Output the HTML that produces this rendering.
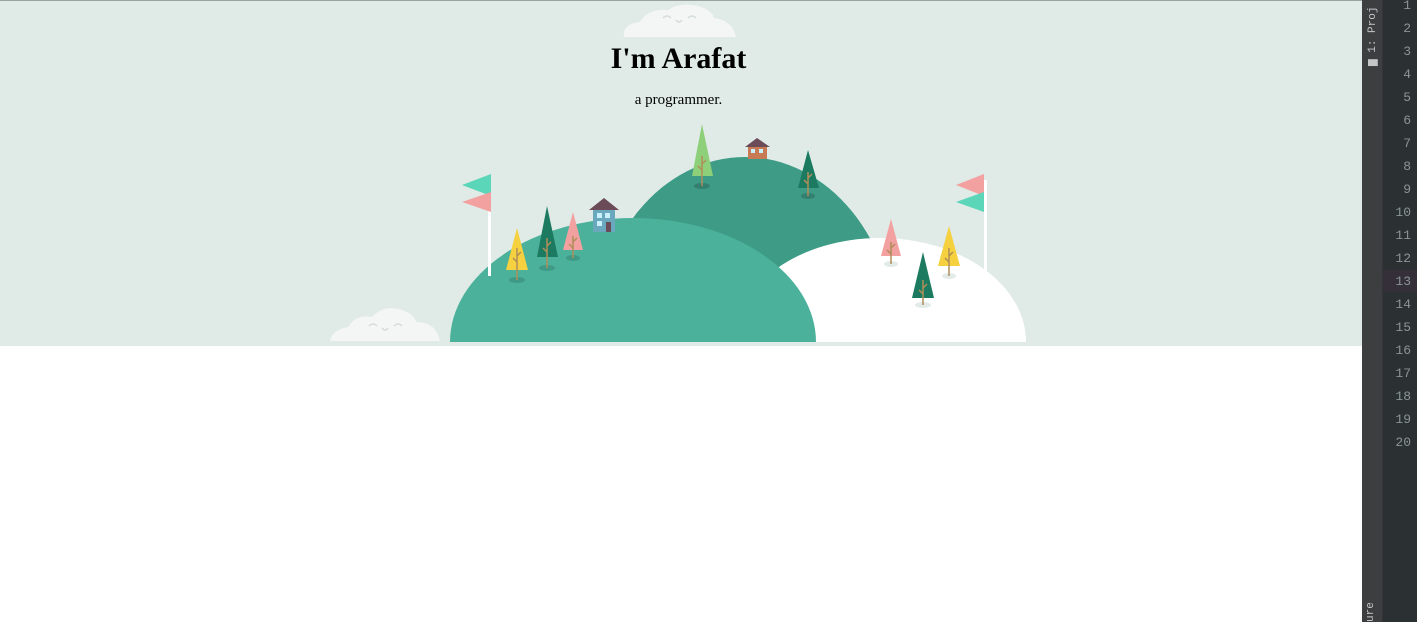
<!DOCTYPE html>
<html><head><style>
html,body{margin:0;padding:0;width:1417px;height:622px;overflow:hidden;background:#fff;font-family:"Liberation Serif",serif}
#banner{position:absolute;left:0;top:0;width:1362px;height:346px;background:#e0ebe7;border-top:1px solid #9aa3a0;box-sizing:border-box;overflow:hidden}
h1{position:absolute;left:0;width:1357px;top:41px;margin:0;text-align:center;font-size:30px;font-weight:bold;color:#000}
p{position:absolute;left:0;width:1357px;top:91px;margin:0;text-align:center;font-size:15px;color:#000}
#side{position:absolute;left:1362px;top:0;width:20px;height:622px;background:#3c3e40;border-right:1px solid #323436}
#gut{position:absolute;left:1383px;top:0;width:34px;height:622px;background:#2b3033}
.n{position:absolute;left:0;width:28px;text-align:right;font:13px "Liberation Mono",monospace;color:#8b9497}
.vt{position:absolute;font:11px "Liberation Mono",monospace;color:#c4c6c8;transform:rotate(-90deg);transform-origin:left top;white-space:nowrap}
</style></head><body>
<div id="banner">
<svg width="1362" height="346" style="position:absolute;left:0;top:-1px">
<g fill="#f4f6f5">
<path d="M624 37 Q622 24 640 22 Q648 8 668 10 Q680 2 698 6 Q712 10 714 18 Q732 20 736 37 Z"/>
<path d="M330 341 Q332 330 348 327 Q356 314 372 317 Q384 304 402 310 Q414 314 416 322 Q436 322 440 341 Z"/>
</g>
<g fill="none" stroke="#d5dcd9" stroke-width="1.5"><path d="M663 18 q4 -4 8 0 M688 18 q4 -4 8 0 M676 20 q3 4 6 0"/><path d="M369 326 q4 -4 8 0 M394 326 q4 -4 8 0 M382 328 q3 4 6 0"/></g>
<ellipse cx="745" cy="342" rx="151" ry="185" fill="#3d9b86"/>
<ellipse cx="880" cy="342" rx="146" ry="104" fill="#fff"/>
<ellipse cx="633" cy="342" rx="183" ry="124" fill="#4bb19b"/>
<rect x="0" y="342" width="1362" height="4" fill="#e0ebe7"/>
<rect x="488" y="180" width="3" height="96" fill="#fff"/>
<polygon points="491,174 491,196 462,185" fill="#5bd6b8"/>
<polygon points="491,192 491,212 462,202" fill="#f2a0a0"/>
<rect x="984" y="180" width="3" height="106" fill="#fff"/>
<polygon points="984,174 984,196 956,185" fill="#f2a0a0"/>
<polygon points="984,192 984,212 956,202" fill="#5bd6b8"/>
<rect x="593" y="208" width="22" height="24" fill="#6aa8bd"/>
<polygon points="589,210 604,198 619,210" fill="#6b4b58"/>
<rect x="597" y="213" width="5" height="5" fill="#c9f1fb"/><rect x="605" y="213" width="5" height="5" fill="#c9f1fb"/><rect x="597" y="221" width="5" height="5" fill="#c9f1fb"/><rect x="606" y="222" width="5" height="10" fill="#6b4b58"/>
<rect x="748" y="145" width="19" height="14" fill="#c77a53"/>
<polygon points="745,147 757,138 770,147" fill="#6b4b58"/>
<rect x="751" y="149" width="4" height="4" fill="#c9f1fb"/><rect x="759" y="149" width="4" height="4" fill="#c9f1fb"/>
<g>
<ellipse cx="517" cy="280" rx="8" ry="3" fill="#3f9a85"/><polygon points="517,228 506,270 528,270" fill="#f5d03f"/><path d="M517 280V248M517 262l-4-4M517 256l4-4" stroke="#b08e5a" stroke-width="1.5" fill="none"/>
<ellipse cx="547" cy="268" rx="8" ry="3" fill="#3f9a85"/><polygon points="547,206 537,257 558,257" fill="#1b7a60"/><path d="M547 268V238M547 252l-4-4M547 246l4-4" stroke="#b08e5a" stroke-width="1.5" fill="none"/>
<ellipse cx="573" cy="258" rx="7" ry="3" fill="#3f9a85"/><polygon points="573,212 563,250 583,250" fill="#f2a0a0"/><path d="M573 258V236M573 248l-4-4M573 242l4-4" stroke="#b08e5a" stroke-width="1.5" fill="none"/>
<ellipse cx="702" cy="186" rx="8" ry="3" fill="#347f6d"/><polygon points="702,124 692,176 713,176" fill="#8ed07a"/><path d="M702 186V156M702 170l-4-4M702 164l4-4" stroke="#b08e5a" stroke-width="1.5" fill="none"/>
<ellipse cx="808" cy="196" rx="7" ry="3" fill="#347f6d"/><polygon points="808,150 798,188 819,188" fill="#1b7a60"/><path d="M808 196V172M808 184l-4-4M808 178l4-4" stroke="#b08e5a" stroke-width="1.5" fill="none"/>
<ellipse cx="891" cy="264" rx="7" ry="3" fill="#e3ebe8"/><polygon points="891,219 881,256 901,256" fill="#f2a0a0"/><path d="M891 264V242M891 254l-4-4M891 248l4-4" stroke="#b08e5a" stroke-width="1.5" fill="none"/>
<ellipse cx="949" cy="276" rx="7" ry="3" fill="#e3ebe8"/><polygon points="949,226 938,266 960,266" fill="#f5d03f"/><path d="M949 276V248M949 262l-4-4M949 256l4-4" stroke="#b08e5a" stroke-width="1.5" fill="none"/>
<ellipse cx="923" cy="305" rx="8" ry="3" fill="#e3ebe8"/><polygon points="923,252 912,298 934,298" fill="#1b7a60"/><path d="M923 305V280M923 294l-4-4M923 288l4-4" stroke="#b08e5a" stroke-width="1.5" fill="none"/>
</g>
</svg>
<h1>I'm Arafat</h1>
<p>a programmer.</p>
</div>
<div id="side">
<div class="vt" style="left:3px;top:66px">▆ 1: Proj</div>
<div class="vt" style="left:3px;top:622px">ure</div>
</div>
<div id="gut">
<div style="position:absolute;left:0;top:270px;width:34px;height:22px;background:#352f3a"></div>
<div class="n" style="top:-2px">1</div><div class="n" style="top:21px">2</div><div class="n" style="top:44px">3</div><div class="n" style="top:67px">4</div><div class="n" style="top:90px">5</div><div class="n" style="top:113px">6</div><div class="n" style="top:136px">7</div><div class="n" style="top:159px">8</div><div class="n" style="top:182px">9</div><div class="n" style="top:205px">10</div><div class="n" style="top:228px">11</div><div class="n" style="top:251px">12</div><div class="n" style="top:274px">13</div><div class="n" style="top:297px">14</div><div class="n" style="top:320px">15</div><div class="n" style="top:343px">16</div><div class="n" style="top:366px">17</div><div class="n" style="top:389px">18</div><div class="n" style="top:412px">19</div><div class="n" style="top:435px">20</div>
</div>
</body></html>
